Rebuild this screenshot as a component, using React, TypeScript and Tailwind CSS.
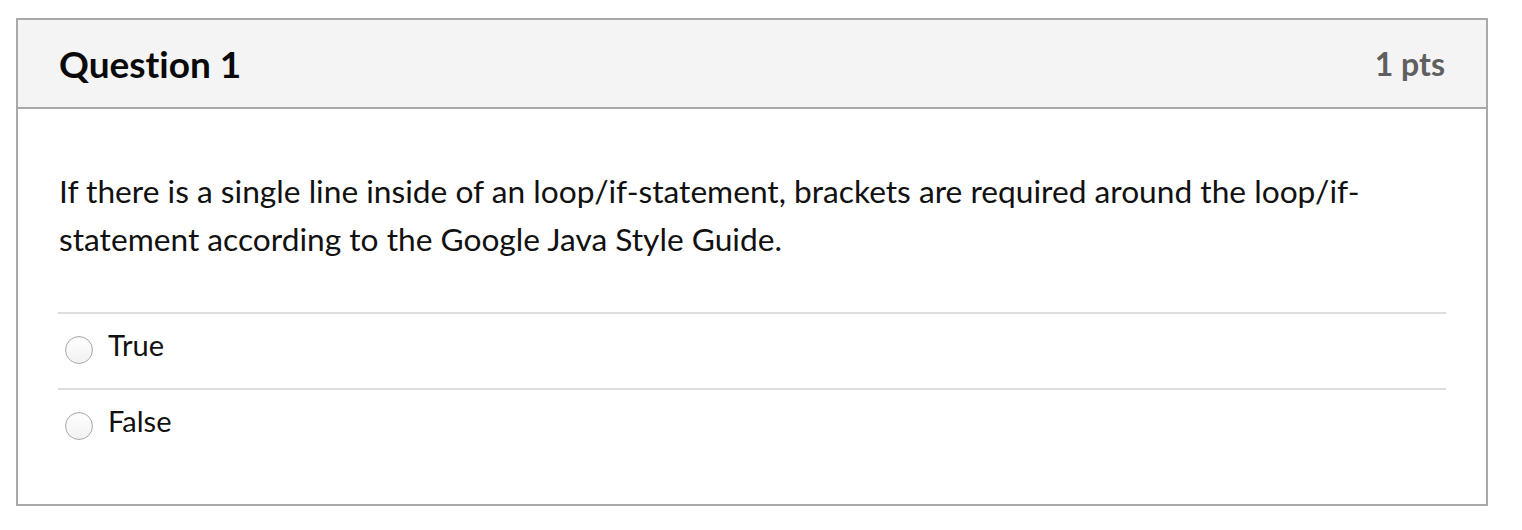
import React from "react";

function Radio() {
  return (
    <span className="mt-[15px] ml-[7px] mr-[15px] inline-block h-[28px] w-[28px] shrink-0 rounded-full border border-[#aaaaaa] bg-gradient-to-b from-[#ffffff] to-[#f1f1f1] shadow-[inset_0_1px_1px_rgba(0,0,0,0.05)]" />
  );
}

function Answer({ label }: { label: string }) {
  return (
    <div className="flex items-start border-t-2 border-[#dedede] pt-[7px] pb-[19px]">
      <Radio />
      <span className="text-[29px] leading-[48px] text-[#111]">{label}</span>
    </div>
  );
}

export default function App() {
  return (
    <div
      className="min-h-[530px] bg-white pt-[18px] pl-[16px] [font-variant-ligatures:none]"
      style={{ fontFamily: "Lato, 'Open Sans', sans-serif" }}
    >
      <div className="w-[1472px] border-2 border-[#a9a9a9] bg-white">
        <div className="flex h-[89px] items-center justify-between border-b-2 border-[#a9a9a9] bg-[#f4f4f4] px-[41px]">
          <h2 className="text-[37px] font-bold leading-[44px] text-[#0a0a0a]">Question 1</h2>
          <span className="text-[32px] font-bold leading-[44px] text-[#5f5f5f]">1 pts</span>
        </div>
        <div className="px-[40px] pt-[58px] pb-[40px]">
          <p className="pl-[1px] text-[31.7px] leading-[48px] text-[#111]">
            If there is a single line inside of an loop/if-statement, brackets are required around the loop/if-statement according to the Google Java Style Guide.
          </p>
          <div className="mt-[49px]">
            <Answer label="True" />
            <Answer label="False" />
          </div>
        </div>
      </div>
    </div>
  );
}
